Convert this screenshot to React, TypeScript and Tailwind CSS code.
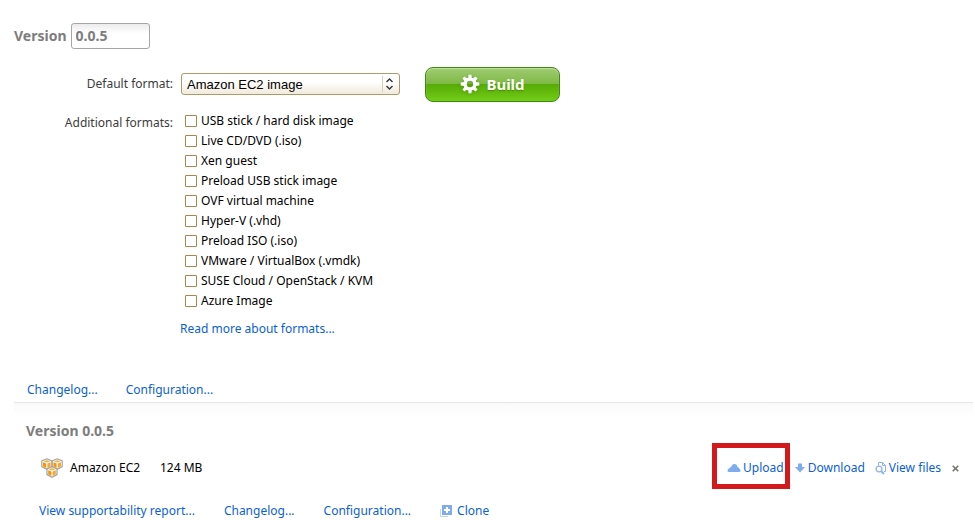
import React from "react";

const formats = [
  "USB stick / hard disk image",
  "Live CD/DVD (.iso)",
  "Xen guest",
  "Preload USB stick image",
  "OVF virtual machine",
  "Hyper-V (.vhd)",
  "Preload ISO (.iso)",
  "VMware / VirtualBox (.vmdk)",
  "SUSE Cloud / OpenStack / KVM",
  "Azure Image",
];

function GearIcon() {
  return (
    <svg width="20" height="20" viewBox="-10 -10 20 20" className="drop-shadow-sm" aria-hidden="true">
      <g fill="#fff">
        {[0, 45, 90, 135, 180, 225, 270, 315].map((a) => (
          <path key={a} d="M-1.9 -5 L-1.4 -9.3 H1.4 L1.9 -5 Z" transform={`rotate(${a})`} />
        ))}
      </g>
      <circle r="4.9" fill="none" stroke="#fff" strokeWidth="3.4" />
    </svg>
  );
}

function Cube({ x, y }: { x: number; y: number }) {
  return (
    <g transform={`translate(${x} ${y})`}>
      <path d="M0 -5.2 L5 -3 V2.6 L0 5.2 L-5 2.6 V-3 Z" fill="#fff" stroke="#a3a39b" strokeWidth="1.2" />
      <path d="M0 -4 L3.4 -2.6 L0 -1.4 L-3.4 -2.6 Z" fill="#fbb24a" />
      <path d="M-3.8 -1.8 L-0.6 -0.4 V3.9 L-3.8 2.2 Z" fill="#f9940a" />
      <path d="M3.8 -1.8 L0.6 -0.4 V3.9 L3.8 2.2 Z" fill="#fba62c" />
    </g>
  );
}

function CubesIcon() {
  return (
    <svg width="22" height="20" viewBox="0 0 22 20" aria-hidden="true">
      <Cube x={5.8} y={6} />
      <Cube x={16.2} y={6} />
      <Cube x={11} y={14} />
    </svg>
  );
}

function CloudIcon() {
  return (
    <svg width="14" height="10" viewBox="0 0 14 10" aria-hidden="true">
      <path d="M2 9 Q0.5 9 0.5 7.4 Q0.5 5.7 2.6 5.2 Q3.2 4 4.2 4 Q5 1 7.4 1 Q10 1 10.5 4 Q12 4 12.2 5.5 Q13.5 6 13.5 7.5 Q13.5 9 12 9 Z" fill="#7facee" />
    </svg>
  );
}

function DownIcon() {
  return (
    <svg width="10" height="10" viewBox="0 0 10 10" aria-hidden="true">
      <path d="M3 0.5 H7 V4 H10 L5 9.5 L0 4 H3 Z" fill="#7facee" />
    </svg>
  );
}

function ViewIcon() {
  return (
    <svg width="12" height="13" viewBox="0 0 12 13" fill="none" stroke="#8db5ef" aria-hidden="true">
      <path d="M3.5 3.5 V0.5 H7.5 L10.5 3.5 V9.5 H9" />
      <path d="M7.5 0.5 V3.5 H10.5" />
      <circle cx="4" cy="7" r="2.9" strokeWidth="1.3" />
      <path d="M6 9 L9 12" strokeWidth="2" />
    </svg>
  );
}

function CloneIcon() {
  return (
    <svg width="12" height="12" viewBox="0 0 12 12" aria-hidden="true">
      <path d="M0.5 4 V11.5 H8" fill="none" stroke="#bfd6f7" />
      <rect x="2" y="0" width="10" height="10" fill="#7facee" />
      <path d="M7 2 V8 M4 5 H10" stroke="#fff" strokeWidth="2" />
    </svg>
  );
}

function Link({ children, className = "" }: { children: React.ReactNode; className?: string }) {
  return (
    <a href="#" className={`flex items-center whitespace-nowrap text-[#0b5fd6] ${className}`}>
      {children}
    </a>
  );
}

export default function App() {
  return (
    <main className="bg-white pt-[23px] pl-[14px] font-['Noto_Sans',sans-serif] text-xs leading-5 text-black">
      <div className="flex items-center gap-1 text-sm font-bold text-[#7d7d7d]">
        <label htmlFor="version">Version</label>
        <input
          id="version"
          defaultValue="0.0.5"
          className="h-[26px] w-[79px] rounded-[3px] border border-[#a6a6a6] bg-linear-to-b from-[#ececec] to-white to-40% px-1 pb-[2px] font-bold"
        />
      </div>

      <div className="mt-[18px] flex items-center">
        <label htmlFor="format" className="w-[159px] pb-[2px] text-right text-[#3c3c3c]">Default format:</label>
        <div className="relative ml-2 w-[219px] pb-[2px]">
          <select
            id="format"
            className="block h-[22px] w-full appearance-none rounded-[3px] border border-[#b09a6c] bg-linear-to-b from-white from-40% to-[#f1eadb] px-[5px] pt-px font-['Liberation_Sans',Arial,sans-serif] text-[13px] leading-5 text-black"
          >
            <option>Amazon EC2 image</option>
          </select>
          <svg className="pointer-events-none absolute top-[3px] right-1 h-4 w-[14px]" viewBox="0 0 14 16" fill="none" aria-hidden="true">
            <path d="M0.5 0 V16" stroke="#d8cfbc" />
            <path d="M4.5 6 L7.5 3 L10.5 6 M4.5 10 L7.5 13 L10.5 10" stroke="#333" strokeWidth="1.4" />
          </svg>
        </div>
        <button className="ml-[25px] flex h-[35px] w-[135px] items-center justify-center gap-[6px] rounded-lg border border-[#3f8a12] bg-[linear-gradient(#9fcb72,#7fba45_48%,#57ab07_50%,#72cd17)] pb-[2px] text-[15px] font-bold text-white shadow-[inset_0_1px_1px_#c3e3a2] text-shadow-sm">
          <GearIcon />
          Build
        </button>
      </div>

      <fieldset className="mt-[9px] flex items-start">
        <div id="formats-label" className="mt-[2px] w-[159px] text-right text-[#3c3c3c]">Additional formats:</div>
        <div role="group" aria-labelledby="formats-label" className="ml-3">
          {formats.map((name) => (
            <label key={name} className="flex h-5 items-center gap-1">
              <input type="checkbox" className="size-3 appearance-none rounded-[1px] border border-[#a08a58] bg-white shadow-[0_0_1px_#d9cba8] checked:bg-[#a08a58]" />
              {name}
            </label>
          ))}
        </div>
      </fieldset>
      <div className="mt-2 ml-[166px] flex">
        <Link>Read more about formats...</Link>
      </div>

      <nav className="mt-[41px] ml-[13px] flex gap-7">
        <Link>Changelog...</Link>
        <Link>Configuration...</Link>
      </nav>

      <section className="mt-[2px] mr-[2px] border-t border-[#e6e6e6] bg-linear-to-b from-[#fafafa] to-white to-[14px] px-3 pt-[18px]">
        <h2 className="text-sm leading-5 font-bold text-[#7d7d7d]">Version 0.0.5</h2>
        <div className="mt-[2px] flex h-[50px] items-center">
          <div className="ml-[15px] flex w-[119px] items-center gap-[7px]">
            <CubesIcon />
            Amazon EC2
          </div>
          <div>124 MB</div>
          <div className="mr-[2px] ml-auto flex items-center">
            <div className="relative">
              <Link className="gap-[2px]"><CloudIcon />Upload</Link>
              <span className="pointer-events-none absolute -top-[15px] -right-[6px] -left-[15px] h-[46px] border-5 border-[#d3191c]" />
            </div>
            <Link className="ml-[11px] gap-[3px]"><DownIcon />Download</Link>
            <Link className="ml-[10px] gap-[2px]"><ViewIcon />View files</Link>
            <button aria-label="Remove" className="ml-[11px]">
              <svg width="7" height="7" viewBox="0 0 7 7" stroke="#77776f" strokeWidth="1.6" aria-hidden="true">
                <path d="M0.7 0.7 L6.3 6.3 M6.3 0.7 L0.7 6.3" />
              </svg>
            </button>
          </div>
        </div>
        <nav className="mt-2 ml-[13px] flex gap-[29px]">
          <Link>View supportability report...</Link>
          <Link>Changelog...</Link>
          <Link>Configuration...</Link>
          <Link className="gap-[5px]"><CloneIcon />Clone</Link>
        </nav>
      </section>
    </main>
  );
}
